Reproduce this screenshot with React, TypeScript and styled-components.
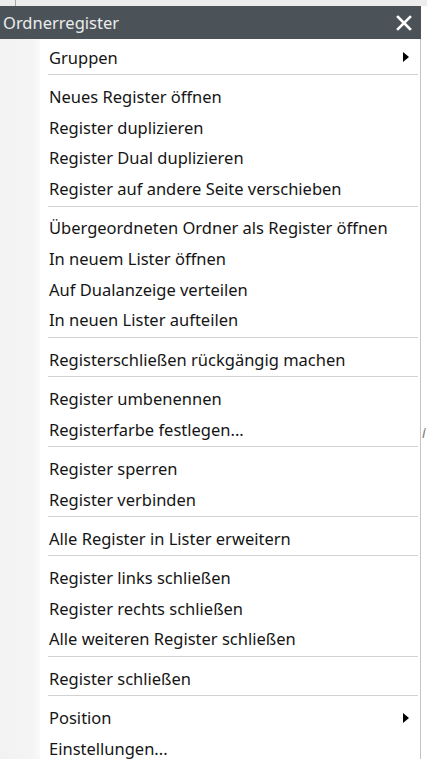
import React from "react";
import styled, { createGlobalStyle } from "styled-components";

type Entry = { label: string; submenu?: boolean };

const groups: Entry[][] = [
  [{ label: "Gruppen", submenu: true }],
  [
    { label: "Neues Register öffnen" },
    { label: "Register duplizieren" },
    { label: "Register Dual duplizieren" },
    { label: "Register auf andere Seite verschieben" },
  ],
  [
    { label: "Übergeordneten Ordner als Register öffnen" },
    { label: "In neuem Lister öffnen" },
    { label: "Auf Dualanzeige verteilen" },
    { label: "In neuen Lister aufteilen" },
  ],
  [{ label: "Registerschließen rückgängig machen" }],
  [{ label: "Register umbenennen" }, { label: "Registerfarbe festlegen..." }],
  [{ label: "Register sperren" }, { label: "Register verbinden" }],
  [{ label: "Alle Register in Lister erweitern" }],
  [
    { label: "Register links schließen" },
    { label: "Register rechts schließen" },
    { label: "Alle weiteren Register schließen" },
  ],
  [{ label: "Register schließen" }],
  [{ label: "Position", submenu: true }, { label: "Einstellungen..." }],
];

const App: React.FC = () => {
  return (
    <>
      <GlobalStyle />
      <Page>
        <TopStrip>
          <StripEdge />
        </TopStrip>
        <TitleBar>
          <Title>Ordnerregister</Title>
          <CloseButton aria-label="Schließen">
            <svg width="16" height="16" viewBox="0 0 16 16">
              <path
                d="M2 2 L14 14 M14 2 L2 14"
                stroke="#ffffff"
                strokeWidth="2.6"
                strokeLinecap="square"
              />
            </svg>
          </CloseButton>
        </TitleBar>
        <Body>
          <Gutter />
          <Menu>
            {groups.map((group, gi) => (
              <React.Fragment key={gi}>
                {gi > 0 && <Separator />}
                {group.map((entry) => (
                  <Item key={entry.label}>
                    <Label>{entry.label}</Label>
                    {entry.submenu && <Arrow />}
                  </Item>
                ))}
              </React.Fragment>
            ))}
          </Menu>
          <Outside>
            <Peek>i</Peek>
          </Outside>
        </Body>
      </Page>
    </>
  );
};

const GlobalStyle = createGlobalStyle`
  html, body {
    margin: 0;
    padding: 0;
    background: #ffffff;
    overflow: hidden;
  }
  body {
    font-family: "Noto Sans", "Open Sans", sans-serif;
  }
`;

const Page = styled.div`
  display: flex;
  flex-direction: column;
  width: 427px;
  height: 759px;
  overflow: hidden;
`;

const TopStrip = styled.div`
  height: 6px;
  flex-shrink: 0;
  background: #ededed;
  display: flex;
`;

const StripEdge = styled.div`
  width: 15px;
  border-right: 1px solid #a9a9a9;
`;

const TitleBar = styled.div`
  height: 33px;
  flex-shrink: 0;
  width: 421px;
  background: #4b5359;
  display: flex;
  align-items: center;
  justify-content: space-between;
  box-sizing: border-box;
  padding: 0 9px 0 3px;
`;

const Title = styled.span`
  color: #ececec;
  font-size: 16.5px;
`;

const CloseButton = styled.div`
  display: flex;
  align-items: center;
  justify-content: center;
  width: 16px;
  height: 16px;
`;

const Body = styled.div`
  display: flex;
  flex: 1;
  min-height: 0;
  overflow: hidden;
`;

const Gutter = styled.div`
  width: 40px;
  background: linear-gradient(to right, #f2f2f2 0%, #f4f4f4 80%, #fafafa 100%);
`;

const Menu = styled.div`
  width: 380px;
  background: #ffffff;
  border-right: 1px solid #c4c4c4;
  display: flex;
  flex-direction: column;
  padding-top: 3px;
`;

const Item = styled.div`
  height: 30.6px;
  display: flex;
  align-items: center;
  justify-content: space-between;
  padding: 0 11px 0 9px;
  flex-shrink: 0;
`;

const Label = styled.span`
  color: #151515;
  font-size: 16.5px;
  white-space: nowrap;
`;

const Arrow = styled.span`
  width: 0;
  height: 0;
  border-top: 5px solid transparent;
  border-bottom: 5px solid transparent;
  border-left: 6px solid #000000;
`;

const Separator = styled.div`
  height: 1px;
  margin: 1.8px 2px 6px 8px;
  background: #d2d2d2;
  flex-shrink: 0;
`;

const Outside = styled.div`
  flex: 1;
  background: #ffffff;
  position: relative;
  overflow: hidden;
`;

const Peek = styled.span`
  position: absolute;
  top: 384px;
  left: 1px;
  font-style: italic;
  font-size: 14px;
  color: #7a7a7a;
`;

export default App;
